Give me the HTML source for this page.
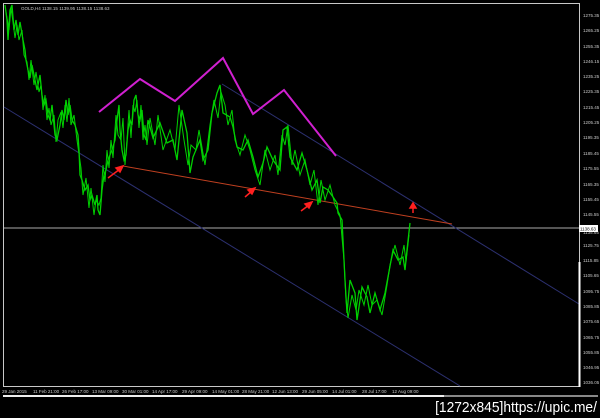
<!DOCTYPE html>
<html><head><style>
body{margin:0;background:#000;width:600px;height:418px;overflow:hidden;position:relative;font-family:"Liberation Sans",sans-serif}
svg{position:absolute;left:0;top:0}
.wm{position:absolute;right:3px;top:399px;color:#fff;font-size:15px;line-height:17px;white-space:nowrap;font-family:"Liberation Sans Narrow","Liberation Sans",sans-serif;transform:scaleX(0.92);transform-origin:right top}
</style></head><body>
<svg width="600" height="418" viewBox="0 0 600 418">
<rect x="3.5" y="3.5" width="576" height="383" fill="none" stroke="#c8c8c8" stroke-width="1"/>
<line x1="4" y1="228" x2="579" y2="228" stroke="#aaa" stroke-width="1"/>
<line x1="4" y1="107" x2="460" y2="386" stroke="#2c3070" stroke-width="1"/>
<line x1="222" y1="84" x2="579" y2="304" stroke="#2c3070" stroke-width="1"/>
<line x1="123" y1="166" x2="452" y2="224" stroke="#c04020" stroke-width="1"/>
<polyline points="99,112 140,79 175,101 223,58 253,114 284,90 336,156" fill="none" stroke="#d020d0" stroke-width="2"/>
<g fill="none" stroke="#00d000" stroke-width="1.3" stroke-linejoin="miter">
<polyline points="5,5 7,20 8,40 10,10 12,5 14,30 16,20 18,35 20,22 23,40 25,50 26,60 28,70 30,78 32,65 35,80 37,90 40,75 42,95 44,105 46,100 48,115 50,120 52,105 55,135 57,140 60,125 62,110 64,120 66,100 68,115 70,105 72,120 75,125 78,135 79,150 80,175 82,180 85,190 88,185 90,200 92,195 95,205 97,195 98,210 100,215 102,190 104,175 106,170 108,160 110,155 112,150 115,140 117,120 119,105 120,130 122,150 124,160 126,155 128,130 130,120 132,125 134,100 136,95 138,115 140,120 142,110 144,135 146,140 148,120 153,138 160,123 167,143 173,140 177,160 182,110 187,133 190,173 193,157 200,140 203,160 208,150 212,113 217,93 220,85 223,113 230,117 233,127 237,147 243,150 248,140 253,157 258,177 263,163 267,147 273,160 280,170 283,130 287,127 290,157 297,170 302,153 307,170 312,190 317,180 320,203 323,187 328,190 333,197 337,203 338,213 342,220 343,240 345,280 347,313 350,280 355,293 357,320 362,287 367,297 370,313 375,293 380,310 385,293 388,277 393,250 398,260 403,257 405,270 407,250 410,223"/>
<polyline stroke-width="1" points="6,12 9,30 11,8 13,22 15,38 17,25 19,40 22,30 24,55 27,62 29,80 31,60 34,85 36,72 39,92 41,85 43,110 45,95 47,120 49,108 51,125 54,115 56,142 58,120 61,112 63,128 65,105 67,122 69,98 71,125 74,115 77,140 81,168 83,195 86,178 89,208 91,188 94,215 96,200 99,205 101,198 103,165 105,182 107,150 109,168 111,140 113,158 116,115 118,135 121,140 123,118 125,165 127,140 129,110 131,138 133,105 135,112 137,100 139,128 141,105 143,140 145,125 147,145 150,118 155,145 158,115 163,150 170,130 175,150 179,105 184,140 188,165 191,145 196,150 199,130 205,165 210,125 214,100 218,118 221,92 225,105 228,125 232,110 235,140 240,155 245,135 250,150 255,170 260,185 265,150 270,170 275,155 278,175 282,135 285,145 288,125 292,165 295,150 300,175 305,160 310,185 314,170 318,205 321,180 325,200 330,185 335,205 340,215 344,260 346,300 348,318 352,295 356,310 359,290 364,305 368,285 372,305 377,300 382,315 387,285 390,265 395,245 400,265 404,245 406,262 409,235"/>
</g>
<g stroke="#ff2020" stroke-width="1.5" fill="#ff2020">
<line x1="108" y1="178" x2="120" y2="169"/><polygon points="123,166 116,168 120,172"/>
<line x1="245" y1="197" x2="252" y2="191"/><polygon points="255,188 248,190 252,194"/>
<line x1="301" y1="211" x2="309" y2="205"/><polygon points="312,202 305,204 309,208"/>
<line x1="413" y1="213" x2="413" y2="207"/><polygon points="413,203 410,208 416,208"/>
</g>
<g fill="#c8c8c8" font-size="4.5" font-family="Liberation Sans,sans-serif">
<text x="21" y="10">GOLD,H4  1138.15 1139.95 1138.15 1138.63</text>
<text x="583" y="17">1275.35</text><text x="583" y="32">1265.25</text><text x="583" y="48">1255.35</text><text x="583" y="63">1246.15</text><text x="583" y="78">1235.25</text><text x="583" y="93">1225.35</text><text x="583" y="109">1215.45</text><text x="583" y="124">1205.25</text><text x="583" y="139">1195.35</text><text x="583" y="155">1185.45</text><text x="583" y="170">1175.55</text><text x="583" y="186">1165.35</text><text x="583" y="201">1155.45</text><text x="583" y="216">1145.55</text><text x="583" y="234">1135.65</text><text x="583" y="247">1125.75</text><text x="583" y="262">1115.85</text><text x="583" y="277">1105.65</text><text x="583" y="293">1095.75</text><text x="583" y="308">1085.85</text><text x="583" y="323">1075.65</text><text x="583" y="339">1065.75</text><text x="583" y="354">1055.85</text><text x="583" y="369">1046.95</text><text x="583" y="384">1036.05</text>
<text x="2" y="393">29 Jan 2015</text><text x="33" y="393">11 Feb 21:00</text><text x="62" y="393">26 Feb 17:00</text><text x="92" y="393">13 Mar 09:00</text><text x="122" y="393">30 Mar 01:00</text><text x="152" y="393">14 Apr 17:00</text><text x="182" y="393">29 Apr 09:00</text><text x="212" y="393">14 May 01:00</text><text x="242" y="393">28 May 21:00</text><text x="272" y="393">12 Jun 13:00</text><text x="302" y="393">29 Jun 05:00</text><text x="332" y="393">14 Jul 01:00</text><text x="362" y="393">28 Jul 17:00</text><text x="392" y="393">12 Aug 09:00</text>
</g>
<rect x="579" y="225" width="19" height="7" fill="#fff"/>
<text x="580" y="230.5" font-size="4.5" fill="#000" font-family="Liberation Sans,sans-serif">1138.63</text>
<rect x="578.5" y="262" width="2" height="125" fill="#fff"/>
<rect x="3" y="395" width="595" height="2" fill="#888"/>
<rect x="3" y="395" width="441" height="2" fill="#eee"/>
</svg>
<div class="wm">[1272x845]https://upic.me/</div>
</body></html>
